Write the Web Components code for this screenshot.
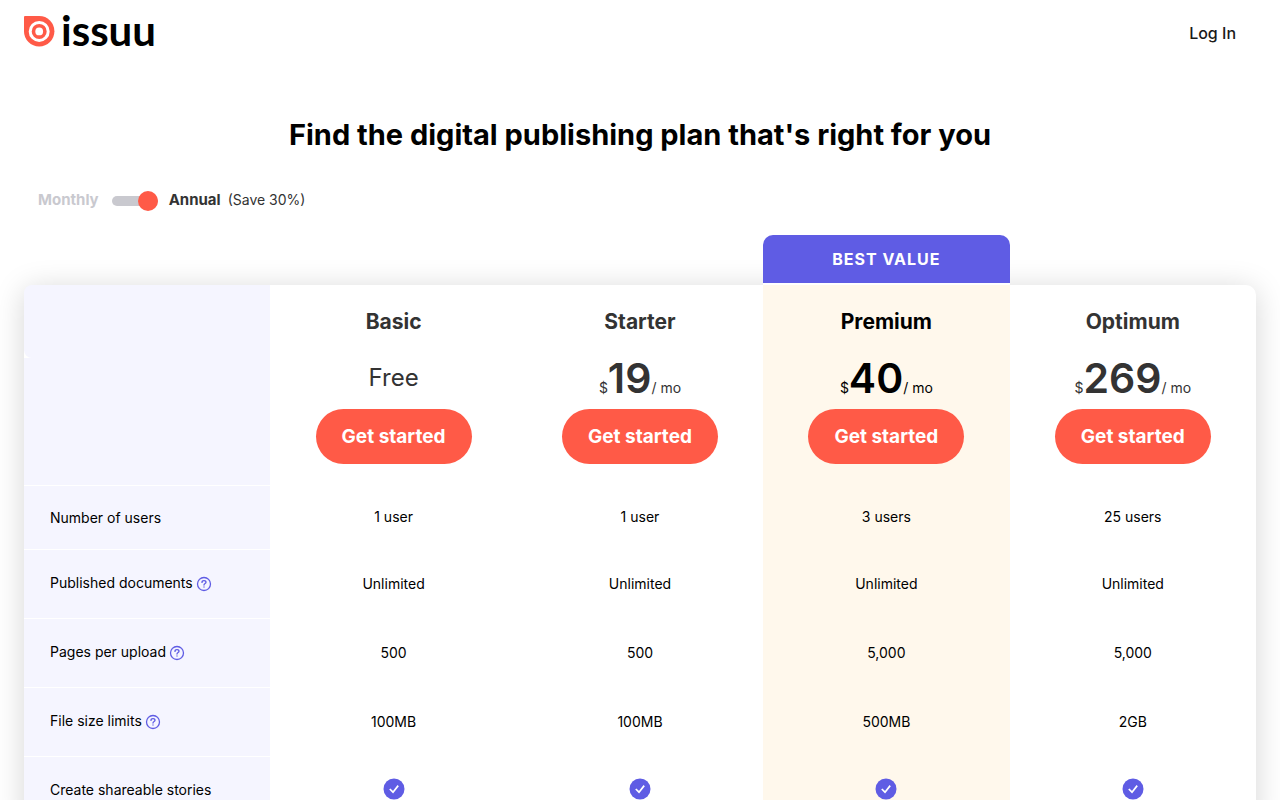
<!DOCTYPE html>
<html lang="en">
<head>
<meta charset="utf-8">
<meta name="viewport" content="width=device-width, initial-scale=1">
<title>Issuu Plans</title>
<style>
body
{
    margin: 0;
    background: #fff;
    color: #000;
    font-family: Inter, "Liberation Sans", sans-serif;
    font-size: 14px;
}
</style>
</head>
<body>
<site-header></site-header>
<plans-page>
    <span slot="title">Find the digital publishing plan that's right for you</span>
    <billing-switch slot="billing"></billing-switch>
    <plans-table slot="table"></plans-table>
</plans-page>

<script>
// crea el shadow root de cada componente
function montar(el, html)
{
    const template = document.createElement("template")
    template.innerHTML = html
    el.attachShadow({mode:"open"}).appendChild(template.content.cloneNode(true))
}

const headerHtml = `
<style>
:host
{
    display: block;
}

header
{
    display: flex;
    justify-content: space-between;
    align-items: center;
    height: 62px;
    padding: 0 44px 0 24px;
}

a
{
    color: #1a1a1a;
    text-decoration: none;
    font-size: 16px;
    font-weight: 500;
    line-height: 24px;
    padding-top: 4px;
}

a.logo
{
    display: flex;
    align-items: center;
    gap: 6px;
    padding: 0;
    color: #000;
    font-family: Lato, sans-serif;
    font-size: 42px;
    font-weight: 700;
    line-height: 48px;
}

.logo span
{
    padding-bottom: 2px;
}
</style>
<header>
<a class="logo" href="#">
<svg width="31" height="31" viewBox="0 0 31 31" aria-hidden="true">
<path d="M1 0H15.2A15.2 15.2 0 1 1 0 15.2V1A1 1 0 0 1 1 0Z" fill="#ff5a47"/>
<circle cx="15.2" cy="15.4" r="9" fill="none" stroke="#fff" stroke-width="3"/>
<circle cx="15.2" cy="15.4" r="3.9" fill="#fff"/>
</svg>
<span>issuu</span>
</a>
<a href="#">Log In</a>
</header>`

class SiteHeader extends HTMLElement {
    constructor() {
      super();
      montar(this, headerHtml)
    }
}

const pageHtml = `
<style>
:host
{
    display: block;
    padding: 49px 24px;
}

h1
{
    margin: 0;
    text-align: center;
    font-size: 29px;
    font-weight: 700;
    line-height: 48px;
}

.billing
{
    padding: 29px 14px 0;
}

.table
{
    padding-top: 73px;
}
</style>
<main>
<h1><slot name="title"></slot></h1>
<div class="billing"><slot name="billing"></slot></div>
<div class="table"><slot name="table"></slot></div>
</main>`

class PlansPage extends HTMLElement {
    constructor() {
      super();
      montar(this, pageHtml)
    }
}

const switchHtml = `
<style>
:host
{
    display: flex;
    align-items: center;
    line-height: 24px;
    color: #333;
}

label, b
{
    font-size: 15px;
    font-weight: 700;
}

label
{
    color: #c9c9cf;
}

input
{
    appearance: none;
    display: flex;
    align-items: center;
    width: 46px;
    height: 10px;
    margin: 2px 11px 0 13px;
    border-radius: 5px;
    background: #c9c9cf;
    cursor: pointer;
}

input::before
{
    content: "";
    width: 20px;
    height: 20px;
    border-radius: 50%;
    background: #ff5a47;
}

input:checked::before
{
    margin-left: 26px;
}

small
{
    font-size: 14px;
    margin-left: 7px;
}
</style>
<label for="annual">Monthly</label>
<input type="checkbox" id="annual" checked aria-label="Annual billing">
<b>Annual</b><small>(Save 30%)</small>`

class BillingSwitch extends HTMLElement {
    constructor() {
      super();
      montar(this, switchHtml)
    }
}

const priceHtml = `
<style>
:host
{
    display: block;
    line-height: 40px;
    height: 51px;
}

b
{
    font-size: 41px;
    font-weight: 600;
}

.free
{
    font-size: 24px;
    line-height: 40px;
}
</style>`

class PlanPrice extends HTMLElement {
    constructor() {
      super();
      const precio = this.getAttribute("amount")
      montar(this, priceHtml + (precio == "0"
        ? `<span class="free">Free</span>`
        : `<span>$</span><b>${precio}</b><span>/ mo</span>`))
    }
}

const startHtml = `
<style>
:host
{
    display: block;
}

button
{
    height: 55px;
    padding: 0 26px;
    border: 0;
    border-radius: 28px;
    background: #ff5a47;
    color: #fff;
    font: 700 19px/24px Inter, "Liberation Sans", sans-serif;
    cursor: pointer;
}
</style>
<button type="button"><slot></slot></button>`

class StartButton extends HTMLElement {
    constructor() {
      super();
      montar(this, startHtml)
    }
}

const helpHtml = `
<style>
:host
{
    display: inline-block;
    vertical-align: middle;
    margin-left: 3px;
}

button
{
    display: block;
    padding: 0;
    border: 0;
    background: none;
}

svg
{
    display: block;
}
</style>
<button type="button" aria-label="More info">
<svg width="16" height="16" viewBox="0 0 16 16" fill="none" stroke="#5f5ce4" stroke-width="1.3" stroke-linecap="round">
<circle cx="8" cy="8" r="6.5"/>
<path d="M6 6.4C6 5.3 6.8 4.7 8 4.7S10 5.4 10 6.3C10 7.6 8 7.5 8 9"/>
<path d="M8 11V11.1"/>
</svg>
</button>`

class HelpTip extends HTMLElement {
    constructor() {
      super();
      montar(this, helpHtml)
    }
}

const checkHtml = `
<style>
:host
{
    display: block;
    padding-bottom: 4px;
}

svg
{
    display: block;
    margin: 0 auto;
}
</style>
<svg width="22" height="22" viewBox="0 0 22 22" role="img" aria-label="Included">
<circle cx="11" cy="11" r="10.5" fill="#5f5ce4"/>
<path d="M6.8 11L10 14.2L15.2 7.6" fill="none" stroke="#fff" stroke-width="1.7"/>
</svg>`

class CheckMark extends HTMLElement {
    constructor() {
      super();
      montar(this, checkHtml)
    }
}

const tableCss = `
<style>
:host
{
    display: block;
    border-radius: 10px;
    background: #fff;
    box-shadow: 0 4px 30px rgba(0, 0, 0, 0.17);
}

table
{
    width: 100%;
    table-layout: fixed;
    border-collapse: separate;
    border-spacing: 0;
    text-align: center;
    line-height: 20px;
}

th, td
{
    box-sizing: border-box;
    padding: 0;
    font-weight: 400;
}

.names > *
{
    height: 73px;
    font-size: 21px;
    font-weight: 700;
    line-height: 24px;
    color: #333;
}

.prices > *
{
    height: 127px;
    vertical-align: top;
    color: #333;
}

tbody tr > *
{
    height: 69px;
    border-top: 1px solid #fff;
}

tbody > tr:first-child > *
{
    height: 64px;
}

tbody > tr:first-child > td
{
    padding-bottom: 2px;
}

tr > :first-child
{
    background: #f5f5ff;
}

.names > :first-child
{
    border-radius: 8px 0 0 8px;
}

tbody th
{
    text-align: left;
    padding-left: 26px;
}

tbody > tr + tr > th
{
    padding-bottom: 2px;
}

tr > .best
{
    position: relative;
    background: #fff8ec;
    border-color: #fff8ec;
    color: #000;
}

.badge
{
    position: absolute;
    left: 0;
    right: 0;
    bottom: 100%;
    border-bottom: 2px solid #fff;
    border-radius: 10px 10px 0 0;
    background: #5f5ce4;
    background-clip: padding-box;
    color: #fff;
    font-size: 16px;
    line-height: 48px;
    letter-spacing: 1px;
}
</style>`

const planes = [
    ["Basic", "0"],
    ["Starter", "19"],
    ["Premium", "40"],
    ["Optimum", "269"]
]

const filas = [
    ["Number of users", false, "1 user", "1 user", "3 users", "25 users"],
    ["Published documents", true, "Unlimited", "Unlimited", "Unlimited", "Unlimited"],
    ["Pages per upload", true, "500", "500", "5,000", "5,000"],
    ["File size limits", true, "100MB", "100MB", "500MB", "2GB"],
    ["Create shareable stories", false, true, true, true, true]
]

class PlansTable extends HTMLElement {
    constructor() {
      super();
      const clase = i => i == 2 ? ` class="best"` : ""
      const nombres = planes.map((p, i) =>
        `<th scope="col"${clase(i)}>${i == 2 ? `<div class="badge">BEST VALUE</div>` : ""}${p[0]}</th>`).join("")
      const precios = planes.map((p, i) =>
        `<td${clase(i)}><plan-price amount="${p[1]}"></plan-price><start-button>Get started</start-button></td>`).join("")
      const cuerpo = filas.map(([nombre, ayuda, ...valores]) =>
        `<tr><th scope="row">${nombre}${ayuda ? "<help-tip></help-tip>" : ""}</th>` +
        valores.map((v, i) => `<td${clase(i)}>${v === true ? "<check-mark></check-mark>" : v}</td>`).join("") +
        `</tr>`).join("")

      montar(this, `${tableCss}
<table>
<thead>
<tr class="names"><td></td>${nombres}</tr>
<tr class="prices"><td></td>${precios}</tr>
</thead>
<tbody>${cuerpo}</tbody>
</table>`)
    }
}

  window.customElements.define("site-header", SiteHeader);
  window.customElements.define("plans-page", PlansPage);
  window.customElements.define("billing-switch", BillingSwitch);
  window.customElements.define("plan-price", PlanPrice);
  window.customElements.define("start-button", StartButton);
  window.customElements.define("help-tip", HelpTip);
  window.customElements.define("check-mark", CheckMark);
  window.customElements.define("plans-table", PlansTable);
</script>
</body>
</html>
